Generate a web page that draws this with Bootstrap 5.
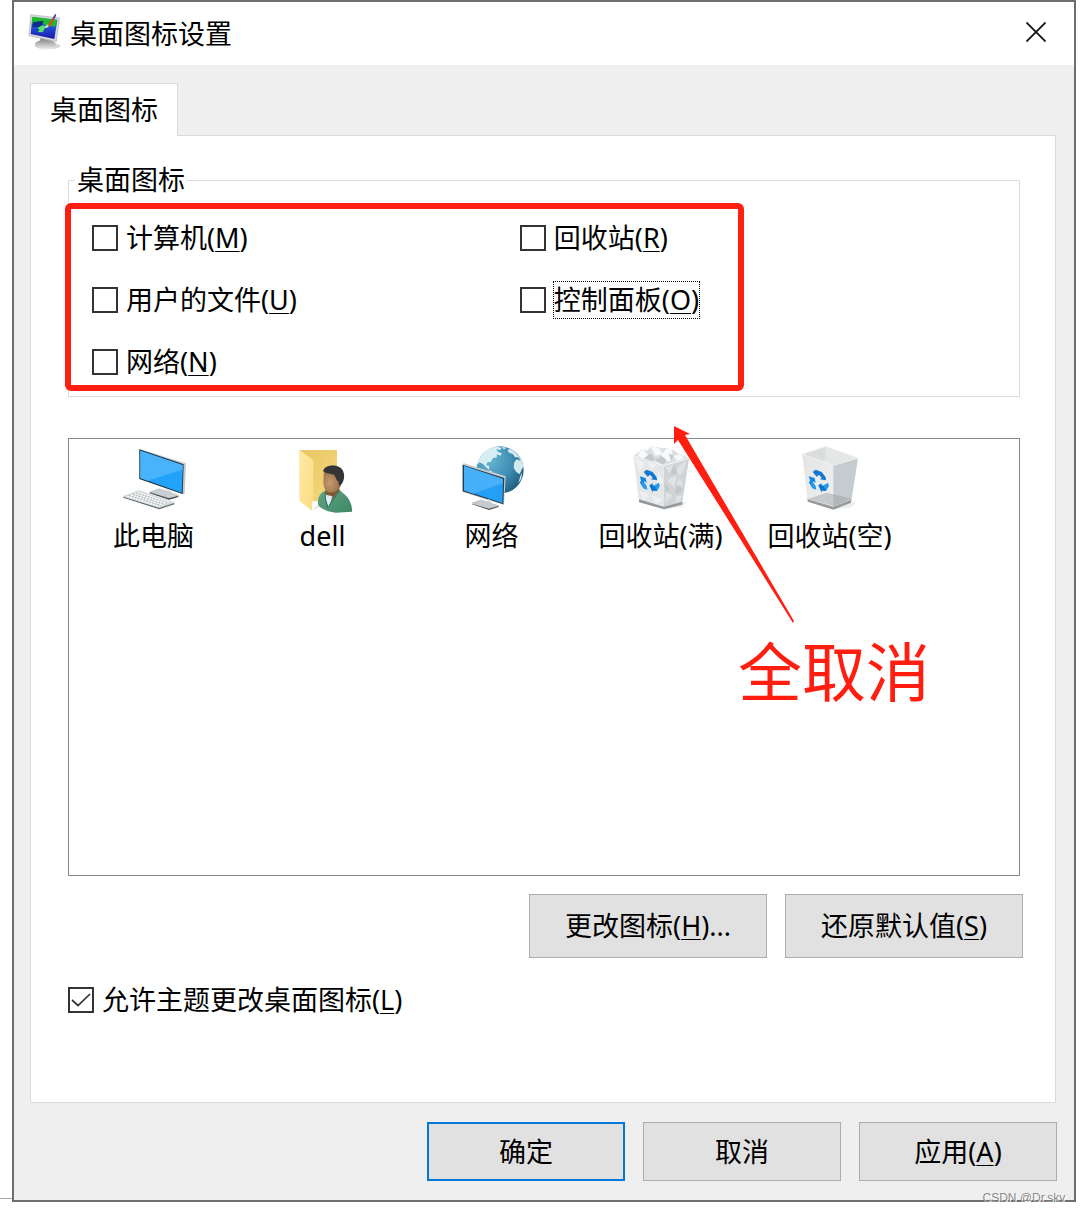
<!DOCTYPE html>
<html lang="zh-CN">
<head>
<meta charset="utf-8">
<meta name="viewport" content="width=device-width, initial-scale=1">
<title>桌面图标设置</title>
<link href="https://cdn.jsdelivr.net/npm/bootstrap@5.3.0/dist/css/bootstrap.min.css" rel="stylesheet">
<style>
body{background:#fff;color:#000;font-family:"Noto Sans","Noto Sans CJK SC",sans-serif;font-size:27px;line-height:36px}
.dialog-win{margin:0 12px;border:2px solid #6d6d6d;background:#efefef}
.title-bar{height:63px;padding:0 22px 0 14px;background:#fff}
.title-bar h1{font-size:27px;line-height:36px;font-weight:400}
.title-icon{width:34px;height:40px}
.close-btn{padding:0;width:32px;height:32px;border:0;background:none;display:grid;place-items:center}
.dialog-main{padding:18px 18px 19px 16px}
.tab-strip{border:0;position:relative;z-index:1;margin-bottom:-1px}
.tab-strip .nav-link,.tab-strip .nav-link.active{border:1px solid #d9d9d9;border-bottom:0;border-radius:0;background:#fff;color:#000;height:53px;margin:0;padding:8px 19px;line-height:36px}
.tab-panel{border:1px solid #d9d9d9;background:#fff;padding:26px 35px 84px 37px}
.group-box{border:1px solid #dcdcdc;padding:0 0 16px 6px;position:relative;margin-bottom:41px}
.group-box legend{float:none;width:auto;font-size:27px;line-height:36px;margin:0;padding:0 2px}
.check-grid{display:grid;grid-template-columns:6fr 7fr;row-gap:26px;padding:22px 0 0 17px}
.check-line{display:flex;align-items:center;gap:8px;height:36px}
.check-line .form-check-input{flex:none;width:26px;height:26px;margin:0;border:2px solid #333;border-radius:0;background-color:#fff;box-shadow:none}
.check-line .form-check-input:checked{background-image:url("data:image/svg+xml,%3Csvg xmlns='http://www.w3.org/2000/svg' viewBox='0 0 22 22'%3E%3Cpath d='M2 11l6 5.500L20 5' fill='none' stroke='%23333' stroke-width='1.700'/%3E%3C/svg%3E");background-size:100% 100%}
u{text-decoration-thickness:1px;text-underline-offset:3px;text-decoration-skip-ink:none}
.focus-mark{outline:1px dotted #000}
.red-frame{position:absolute;left:-4px;top:5px;width:679px;height:188px;border:6px solid #ff1e10;border-radius:6px;pointer-events:none}
.icon-list{border:1px solid #828790;height:438px;padding-top:7px;position:relative}
.icon-tile{width:169px;text-align:center;display:flex;flex-direction:column;align-items:center;gap:4px}
.icon-tile svg{width:66px;height:68px}
.arrow-mark{position:absolute;left:601px;top:-14px;width:130px;height:200px}
.note-text{position:absolute;left:669px;top:193px;font-size:64px;line-height:80px;color:#ff1e10;white-space:nowrap}
.win-btn{border:1px solid #adadad;border-radius:0;background:#e1e1e1;color:#000;font-size:27px;line-height:36px;padding:0}
.icon-actions{margin:18px -3px 24px 0;gap:18px}
.icon-actions .win-btn{width:238px;height:64px}
.dialog-foot{margin:19px -1px 0 0;gap:18px}
.dialog-foot .win-btn{width:198px;height:59px}
.dialog-foot .default-btn{border:2px solid #0078d7}
.water-text{position:absolute;right:2px;bottom:-6px;font:12px/16px "Liberation Sans",sans-serif;color:#8a8a8a;text-shadow:1px 1px 0 #fff}
.back-line{position:absolute;left:-14px;bottom:1px;width:12px;height:1px;background:#a6a6a6}
</style>
</head>
<body>
<main class="dialog-win position-relative">
  <header class="title-bar d-flex align-items-center justify-content-between">
    <div class="d-flex align-items-center gap-2">
      <svg class="title-icon mb-1" viewBox="84 36 102 120" aria-hidden="true">
        <defs>
          <linearGradient id="tScreen" x1="0" y1="0" x2="0" y2="1"><stop offset="0" stop-color="#28b52c"/><stop offset=".45" stop-color="#2451d8"/><stop offset="1" stop-color="#1a18a8"/></linearGradient>
          <linearGradient id="tBase" x1="0" y1="0" x2="0" y2="1"><stop offset="0" stop-color="#8f8f8f"/><stop offset="1" stop-color="#f1f1f1"/></linearGradient>
        </defs>
        <ellipse cx="144" cy="138" rx="37" ry="10" fill="#d8d8d8"/>
        <path d="M120 110L158 116L156 132H122z" fill="#8b8b8b"/>
        <ellipse cx="136" cy="134" rx="32" ry="15" fill="url(#tBase)"/>
        <path d="M92 44L179 54L169 125L87 107z" fill="#d5d7da" stroke="#b4b7ba" stroke-width="2"/>
        <path d="M97 50L172 59L163 117L92 102z" fill="url(#tScreen)"/>
        <path d="M98 52L170 60L166 80L140 76L118 68L96 72z" fill="#20b92c"/>
        <path d="M99 67L130 62L128 75L134 81L127 96L111 90L116 82L97 80z" fill="#0a2f8f"/>
        <path d="M112 84L128 75L137 80L128 97L113 96L118 90z" fill="#55e06b"/>
        <path d="M133 84C136 74 144 71 150 75L142 83z" fill="#b7e5b8"/>
        <path d="M144 76L163 46L168 43L166 52L149 80z" fill="#e74422"/>
        <path d="M158 57L164 43L169 43L166 51L161 59z" fill="#4150b6"/>
      </svg>
      <h1 class="m-0">桌面图标设置</h1>
    </div>
    <button class="close-btn mb-1" type="button" aria-label="关闭"><svg width="20" height="20" viewBox="0 0 20 20"><path d="M.5.500L19.500 19.500M19.500.500L.500 19.500" stroke="#111" stroke-width="1.800"/></svg></button>
  </header>

  <div class="dialog-main">
    <ul class="nav nav-tabs tab-strip">
      <li class="nav-item"><a class="nav-link active" href="#icons" aria-current="page">桌面图标</a></li>
    </ul>
    <section class="tab-panel" id="icons">
      <fieldset class="group-box">
        <legend>桌面图标</legend>
        <div class="check-grid">
          <div class="check-line"><input class="form-check-input" type="checkbox" id="cM"><label for="cM">计算机(<u>M</u>)</label></div>
          <div class="check-line"><input class="form-check-input" type="checkbox" id="cR"><label for="cR">回收站(<u>R</u>)</label></div>
          <div class="check-line"><input class="form-check-input" type="checkbox" id="cU"><label for="cU">用户的文件(<u>U</u>)</label></div>
          <div class="check-line"><input class="form-check-input" type="checkbox" id="cO"><label class="focus-mark" for="cO">控制面板(<u>O</u>)</label></div>
          <div class="check-line"><input class="form-check-input" type="checkbox" id="cN"><label for="cN">网络(<u>N</u>)</label></div>
        </div>
        <div class="red-frame"></div>
      </fieldset>

      <div class="icon-list">
        <div class="d-flex">
          <div class="icon-tile">
            <svg viewBox="62 33 198 204" aria-hidden="true">
              <path d="M117 42L257 85L253 178L246 178L118 132z" fill="#c3c9cc"/>
              <path d="M117 43L250 88L247 177L117 132z" fill="#1f3441"/>
              <path d="M120 47L248 91L244 173L120 129z" fill="#22a3fb"/>
              <path d="M120 47L248 91L246 104L142 137L120 129z" fill="#48b2fb"/>
              <path d="M192 160L215 167L216 177L200 175z" fill="#dfe4e6"/>
              <path d="M148 171L177 161L234 181L206 190z" fill="#c8cfd2" stroke="#9ca4a8"/>
              <path d="M148 172L206 190L234 182V186L206 194L148 175z" fill="#3d474b"/>
              <path d="M69 184L117 167L222 203L177 219z" fill="#d7dcde" stroke="#a6adb1"/>
              <path d="M69 185L177 219L222 204V208L177 223L69 188z" fill="#5c666b"/>
              <path d="M81 184L177 214M92 180L188 210M103 176L198 206M114 172L208 203" stroke="#fff" stroke-width="4" stroke-dasharray="6 3"/>
              <path d="M86 181L182 212M97 178L193 208M108 174L203 204" stroke="#9ba3a8" stroke-width="2" stroke-dasharray="5 4"/>
            </svg>
            <span>此电脑</span>
          </div>
          <div class="icon-tile">
            <svg viewBox="570 33 198 204" aria-hidden="true">
              <defs>
                <linearGradient id="fBack" x1="0" y1="0" x2="1" y2="1"><stop offset="0" stop-color="#e9c560"/><stop offset="1" stop-color="#f5d980"/></linearGradient>
                <linearGradient id="fFront" x1="0" y1="0" x2="1" y2="1"><stop offset="0" stop-color="#ffe9a5"/><stop offset="1" stop-color="#fbdc83"/></linearGradient>
                <radialGradient id="face" cx=".35" cy=".6" r=".7"><stop offset="0" stop-color="#c79c70"/><stop offset="1" stop-color="#8b6440"/></radialGradient>
                <linearGradient id="coat" x1="0" y1="0" x2="1" y2="1"><stop offset="0" stop-color="#62a685"/><stop offset="1" stop-color="#3d8664"/></linearGradient>
              </defs>
              <path d="M636 226L664 198V216z" fill="#e9e9e9"/>
              <path d="M599 45H711V199H636L599 190z" fill="url(#fBack)"/>
              <path d="M599 45L640 75V196L636 197V227L599 199z" fill="url(#fFront)"/>
              <path d="M676 165L717 155L720 172L688 213L675 201z" fill="#805936"/>
              <path d="M671 178L697 184L686 228L675 216z" fill="#dcecf2"/>
              <path d="M672 105C685 98 713 102 724 126C731 152 712 172 694 172C676 174 671 157 670 140z" fill="url(#face)"/>
              <path d="M669 108C674 91 701 88 716 95C735 103 736 128 727 144L718 154L715 139C707 134 708 123 701 119C692 115 681 117 669 108z" fill="#343434"/>
              <path d="M676 168C652 176 653 199 655 211C667 225 688 231 707 233L756 230C758 208 745 185 729 174L718 164C712 178 698 184 686 214C680 202 674 189 676 168z" fill="url(#coat)"/>
              <path d="M676 170C673 188 680 206 684 219M718 167C712 181 699 190 687 214" fill="none" stroke="#2d7151" stroke-width="3"/>
            </svg>
            <span>dell</span>
          </div>
          <div class="icon-tile">
            <svg viewBox="57 33 198 204" aria-hidden="true">
              <defs><radialGradient id="globe" cx=".3" cy=".3" r=".8"><stop offset="0" stop-color="#65b4d0"/><stop offset=".55" stop-color="#408fb5"/><stop offset="1" stop-color="#205a7f"/></radialGradient></defs>
              <circle cx="180" cy="105" r="71" fill="url(#globe)"/>
              <path d="M119 69C129 51 148 37 170 35L185 38L181 45L168 43L175 51L186 55L181 62L170 58L171 67L159 69L151 82L143 80L139 91L147 92L148 104L141 100L130 88L119 82L110 90C111 82 114 75 119 69z" fill="#d8eef3"/>
              <path d="M210 42C232 52 247 74 250 94L246 102L239 118L229 111L221 99L222 84L229 73L241 77L235 67L225 67L218 57L207 53L202 45z" fill="#d2e9ef"/>
              <path d="M185 35L199 38L192 44zM146 105L157 109L153 117zM241 122L246 113L244 132L235 144z" fill="#c4e0e9"/>
              <path d="M67 87L72 85L197 124L192 210L67 171z" fill="#c7cdd0"/>
              <path d="M68 89L193 129L190 208L68 169z" fill="#27404f"/>
              <path d="M72 93L189 132L187 204L72 166z" fill="#239ff6"/>
              <path d="M72 93L189 132L188 145L100 176L72 166z" fill="#46b0fa"/>
              <path d="M144 193L154 196V207L140 203z" fill="#dfe4e6"/>
              <path d="M96 204L124 195L176 212L147 221z" fill="#c5cbce" stroke="#90999e"/>
              <path d="M96 206L147 221L176 213V216L147 225L96 208z" fill="#465055"/>
            </svg>
            <span>网络</span>
          </div>
          <div class="icon-tile">
            <svg viewBox="564 33 198 204" aria-hidden="true">
              <path d="M675 222L742 199L728 216z" fill="#eee"/>
              <path d="M580 62L652 35L747 70L726 207L672 222L597 199z" fill="#e4e6e8"/>
              <path d="M672 92L747 70L726 207L672 222z" fill="#d0d4d7"/>
              <path d="M580 62L606 44L622 47L634 31L654 42L677 38L701 45L718 58L747 70L672 92z" fill="#dde0e3"/>
              <path d="M593 60L606 43L626 61L611 72zM630 32L657 41L668 57L646 62zM656 70L681 39L698 44L689 79zM701 62L719 58L733 70L710 77z" fill="#f8f9fa"/>
              <path d="M609 72L632 55L646 73L631 82zM645 76L664 62L680 75L671 89zM686 56L702 62L694 75z" fill="#c3c9cc"/>
              <path d="M583 70L613 83L600 112zM620 79L653 90L633 105zM654 112L671 139L650 170zM600 169L625 178L610 199zM634 179L669 194L647 209z" fill="#eff0f1"/>
              <path d="M676 97L702 88L690 116zM711 96L740 77L728 115L712 121zM681 135L710 120L703 160zM720 129L732 155L709 148zM678 171L698 182L675 205zM706 181L727 184L711 207z" fill="#dfe2e4"/>
              <path d="M702 88L712 120L690 117zM675 144L690 164L677 171zM710 150L730 164L705 181z" fill="#c1c8cb"/>
              <path d="M597 193L672 215L728 200L726 209L672 223L597 202z" fill="#96999b"/>
              <path d="M580 62L672 92L747 70" fill="none" stroke="#f8f8f8" stroke-width="3"/>
              <g id="recycle">
                <path d="M611 111L620 104L638 111L650 127L651 136L633 133L638 128L630 119L623 125z" fill="#1177d2"/>
                <path d="M599 124L617 129L620 144L613 139L610 148L619 163L610 159L600 143L603 136z" fill="#1688e4"/>
                <path d="M628 151L638 145L638 151L648 154L656 144L659 153L651 168L638 167V173z" fill="#0875d2"/>
                <path d="M605 145L612 142L620 153L622 164L610 160zM643 151L657 143L659 153L650 166z" fill="#269af0"/>
              </g>
            </svg>
            <span>回收站(满)</span>
          </div>
          <div class="icon-tile">
            <svg viewBox="411 78 198 204" aria-hidden="true">
              <defs><linearGradient id="binL" x1="0" y1="0" x2="1" y2="1"><stop offset="0" stop-color="#e2e3e4"/><stop offset="1" stop-color="#f0f1f1"/></linearGradient></defs>
              <path d="M520 267L591 243L572 264z" fill="#eee"/>
              <path d="M427 103L497 79L594 114L573 248L520 268L443 244z" fill="#eceeee"/>
              <path d="M427 103L497 79V121L433 140z" fill="#dadddd"/>
              <path d="M497 79L594 114L520 136L497 128z" fill="#e5e7e7"/>
              <path d="M427 103L520 136V267L443 244z" fill="url(#binL)"/>
              <path d="M520 136L594 114L573 248L520 268z" fill="#c5cbce"/>
              <path d="M445 236L500 218L520 223V258z" fill="#c6c8c9"/>
              <path d="M520 223L575 236L520 258z" fill="#b1b6b9"/>
              <path d="M443 237L520 260L574 240L573 248L520 269L443 245z" fill="#999c9e"/>
              <path d="M427 103L497 79L594 114L520 136z" fill="none" stroke="#f1f2f2" stroke-width="3"/>
              <use href="#recycle" x="-153" y="45"/>
            </svg>
            <span>回收站(空)</span>
          </div>
        </div>
        <svg class="arrow-mark" viewBox="0 0 130 200" aria-hidden="true"><path d="M4 1L20 9L15 10L124 196L123 198L8 15L4 19z" fill="#ff1e10"/></svg>
        <div class="note-text">全取消</div>
      </div>

      <div class="icon-actions d-flex justify-content-end">
        <button class="btn win-btn" type="button">更改图标(<u>H</u>)...</button>
        <button class="btn win-btn" type="button">还原默认值(<u>S</u>)</button>
      </div>
      <div class="check-line"><input class="form-check-input" type="checkbox" id="cL" checked><label for="cL">允许主题更改桌面图标(<u>L</u>)</label></div>
    </section>

    <footer class="dialog-foot d-flex justify-content-end">
      <button class="btn win-btn default-btn" type="button">确定</button>
      <button class="btn win-btn" type="button">取消</button>
      <button class="btn win-btn" type="button">应用(<u>A</u>)</button>
    </footer>
  </div>
  <div class="back-line"></div>
  <div class="water-text">CSDN @Dr.sky_</div>
</main>
<script src="https://cdn.jsdelivr.net/npm/bootstrap@5.3.0/dist/js/bootstrap.bundle.min.js"></script>
</body>
</html>
